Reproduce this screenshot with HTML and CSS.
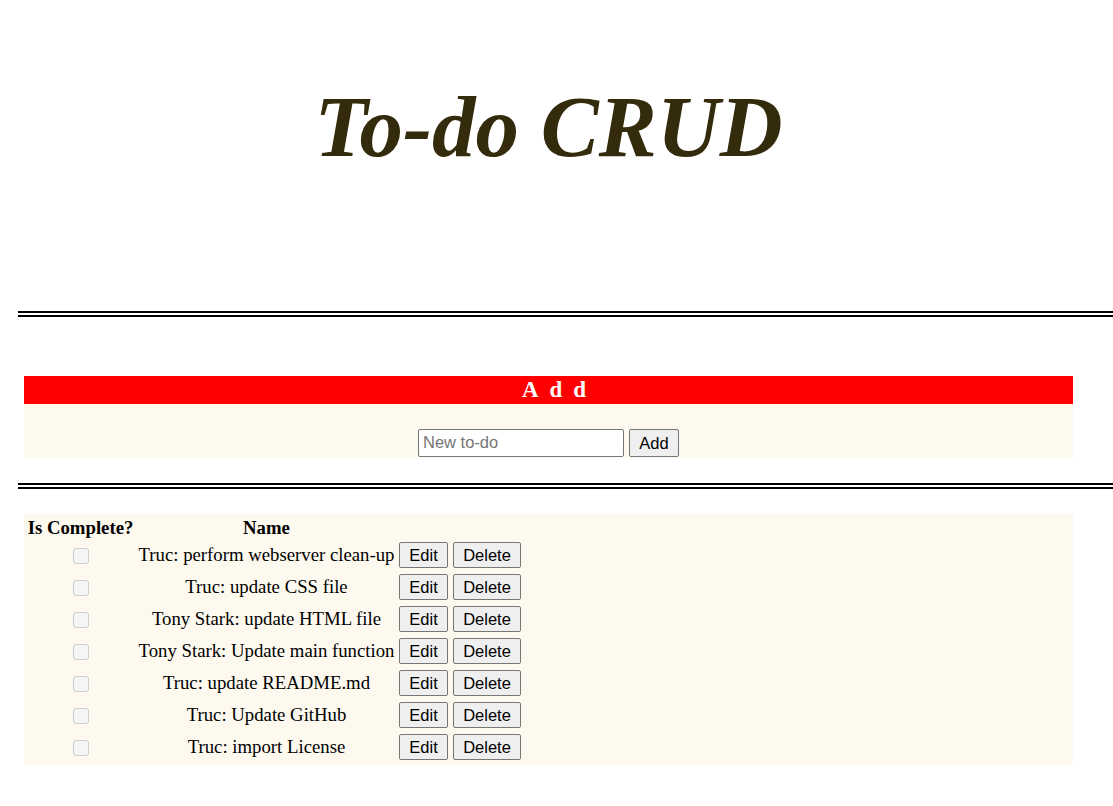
FILE: index.html
```html
<!DOCTYPE html>
<html lang="en">
<head>
<meta charset="utf-8">
<title>To-do CRUD</title>
<link rel="stylesheet" href="styles.css">
</head>
<body>
<div class="page">
  <header class="masthead">
    <h1 class="title">To-do CRUD</h1>
  </header>
  <div class="rule rule-top"></div>
  <section class="add-panel">
    <h2 class="add-heading">Add</h2>
    <form class="add-form">
      <input class="add-input" type="text" placeholder="New to-do">
      <button class="btn" type="button">Add</button>
    </form>
  </section>
  <div class="rule rule-mid"></div>
  <section class="list-panel">
    <table class="todo-table">
      <thead>
        <tr>
          <th class="col-complete">Is Complete?</th>
          <th class="col-name">Name</th>
          <th class="col-actions"></th>
        </tr>
      </thead>
      <tbody>
        <tr>
          <td class="cell-check"><span class="check"></span></td>
          <td class="cell-name">Truc: perform webserver clean-up</td>
          <td class="cell-actions"><div class="actions"><button class="btn" type="button">Edit</button><button class="btn" type="button">Delete</button></div></td>
        </tr>
        <tr>
          <td class="cell-check"><span class="check"></span></td>
          <td class="cell-name">Truc: update CSS file</td>
          <td class="cell-actions"><div class="actions"><button class="btn" type="button">Edit</button><button class="btn" type="button">Delete</button></div></td>
        </tr>
        <tr>
          <td class="cell-check"><span class="check"></span></td>
          <td class="cell-name">Tony Stark: update HTML file</td>
          <td class="cell-actions"><div class="actions"><button class="btn" type="button">Edit</button><button class="btn" type="button">Delete</button></div></td>
        </tr>
        <tr>
          <td class="cell-check"><span class="check"></span></td>
          <td class="cell-name">Tony Stark: Update main function</td>
          <td class="cell-actions"><div class="actions"><button class="btn" type="button">Edit</button><button class="btn" type="button">Delete</button></div></td>
        </tr>
        <tr>
          <td class="cell-check"><span class="check"></span></td>
          <td class="cell-name">Truc: update README.md</td>
          <td class="cell-actions"><div class="actions"><button class="btn" type="button">Edit</button><button class="btn" type="button">Delete</button></div></td>
        </tr>
        <tr>
          <td class="cell-check"><span class="check"></span></td>
          <td class="cell-name">Truc: Update GitHub</td>
          <td class="cell-actions"><div class="actions"><button class="btn" type="button">Edit</button><button class="btn" type="button">Delete</button></div></td>
        </tr>
        <tr>
          <td class="cell-check"><span class="check"></span></td>
          <td class="cell-name">Truc: import License</td>
          <td class="cell-actions"><div class="actions"><button class="btn" type="button">Edit</button><button class="btn" type="button">Delete</button></div></td>
        </tr>
      </tbody>
    </table>
  </section>
</div>
</body>
</html>
```
FILE: styles.css
```css
html, body {
  margin: 0;
  padding: 0;
  background: #ffffff;
  overflow: hidden;
}

body {
  font-family: "Liberation Serif", "Times New Roman", serif;
  font-size: 18.75px;
  color: #000000;
}

.page {
  padding: 0 40px 0 24px;
}

.masthead {
  height: 311px;
  display: flex;
  flex-direction: column;
  align-items: center;
}

.title {
  margin: 77px 0 0 0;
  font-family: "Liberation Serif", "Times New Roman", serif;
  font-style: italic;
  font-weight: bold;
  font-size: 87px;
  line-height: 100px;
  color: #332b0b;
}

.rule {
  height: 0;
  border-top: 6px double #000000;
  margin-left: -6px;
  margin-right: -40px;
}

.rule-top {
  margin-bottom: 59px;
}

.rule-mid {
  margin-top: 25px;
  margin-bottom: 25px;
}

.add-panel {
  background: #fdf9ef;
}

.add-heading {
  margin: 0;
  padding-left: 22px;
  background: #ff0000;
  color: #ffffff;
  font-size: 23px;
  font-weight: bold;
  line-height: 28px;
  letter-spacing: 11px;
  text-align: center;
}

.add-form {
  margin: 0;
  padding: 25px 0 1px 0;
  display: flex;
  justify-content: center;
  gap: 5px;
}

.add-input {
  box-sizing: border-box;
  width: 206px;
  height: 28px;
  margin: 0;
  padding: 0 4px 1px 4px;
  border: 1px solid #767676;
  border-radius: 2px;
  background: #ffffff;
  font-family: "Liberation Sans", Arial, sans-serif;
  font-size: 16.5px;
  color: #000000;
}

.add-input::placeholder {
  color: #757575;
}

.btn {
  box-sizing: border-box;
  height: 27px;
  margin: 0;
  padding: 0 9px;
  border: 1px solid #767676;
  border-radius: 2px;
  background: #efefef;
  font-family: "Liberation Sans", Arial, sans-serif;
  font-size: 16.5px;
  line-height: 18px;
  color: #000000;
}

.add-form .btn {
  height: 28px;
  width: 50px;
  padding: 0;
}

.list-panel {
  background: #fdf9ef;
  padding-bottom: 1px;
}

.todo-table {
  border-collapse: separate;
  border-spacing: 2px;
}

.todo-table th {
  padding: 1px 1px 0 1px;
  line-height: 21px;
  font-weight: bold;
  text-align: center;
  white-space: nowrap;
}

.col-complete {
  width: 107px;
}

.col-name {
  width: 257px;
}

.todo-table td {
  padding: 1px;
  vertical-align: middle;
  text-align: center;
  white-space: nowrap;
}

.check {
  display: inline-block;
  box-sizing: border-box;
  width: 16px;
  height: 16px;
  vertical-align: middle;
  border: 1px solid #cfcfcf;
  border-radius: 3px;
  background: #f5f5f5;
}

.cell-check {
  line-height: 16px;
}

.actions {
  display: flex;
  gap: 5px;
  padding: 1px 0;
}

.actions .btn {
  height: 26px;
}

.actions .btn:first-child {
  width: 49px;
  padding: 0;
}

.actions .btn:last-child {
  width: 68px;
  padding: 0;
}
```
